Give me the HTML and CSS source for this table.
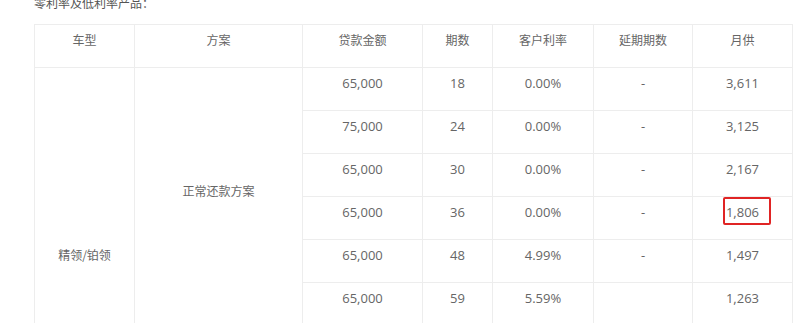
FILE: index.html
```html
<!DOCTYPE html>
<html lang="zh-CN">
<head>
<meta charset="utf-8">
<title>零利率及低利率产品</title>
<link rel="stylesheet" href="styles.css">
</head>
<body>
<div class="page">
  <p class="intro">零利率及低利率产品：</p>
  <table class="rates">
    <colgroup>
      <col class="c-model"><col class="c-plan"><col class="c-amount"><col class="c-term"><col class="c-rate"><col class="c-defer"><col class="c-month">
    </colgroup>
    <thead>
      <tr><th>车型</th><th>方案</th><th>贷款金额</th><th>期数</th><th>客户利率</th><th>延期期数</th><th>月供</th></tr>
    </thead>
    <tbody>
      <tr>
        <td rowspan="9" class="mid">精领/铂领</td>
        <td rowspan="6" class="mid">正常还款方案</td>
        <td class="num">65,000</td><td class="num">18</td><td class="num">0.00%</td><td class="num">-</td><td class="num">3,611</td>
      </tr>
      <tr><td class="num">75,000</td><td class="num">24</td><td class="num">0.00%</td><td class="num">-</td><td class="num">3,125</td></tr>
      <tr><td class="num">65,000</td><td class="num">30</td><td class="num">0.00%</td><td class="num">-</td><td class="num">2,167</td></tr>
      <tr><td class="num">65,000</td><td class="num">36</td><td class="num">0.00%</td><td class="num">-</td><td class="num mark-cell">1,806<span class="mark"></span></td></tr>
      <tr><td class="num">65,000</td><td class="num">48</td><td class="num">4.99%</td><td class="num">-</td><td class="num">1,497</td></tr>
      <tr><td class="num">65,000</td><td class="num">59</td><td class="num">5.59%</td><td class="num"></td><td class="num">1,263</td></tr>
      <tr><td rowspan="3" class="mid">延期还款方案</td><td class="num">65,000</td><td class="num">36</td><td class="num">0.00%</td><td class="num">6</td><td class="num">1,806</td></tr>
      <tr><td class="num">65,000</td><td class="num">48</td><td class="num">4.99%</td><td class="num">6</td><td class="num">1,497</td></tr>
      <tr><td class="num">65,000</td><td class="num">59</td><td class="num">5.59%</td><td class="num">6</td><td class="num">1,263</td></tr>
    </tbody>
  </table>
</div>
</body>
</html>
```
FILE: styles.css
```css
html, body {
  margin: 0;
  padding: 0;
  background: #ffffff;
}

.page {
  padding: 0 0 0 34px;
  font-family: "Open Sans", "Noto Sans CJK SC", sans-serif;
  color: #666666;
}

.intro {
  margin: -6px 0 12px;
  font-size: 12px;
  line-height: 18px;
  color: #555555;
  font-family: "Noto Sans CJK SC", sans-serif;
}

.rates {
  border-collapse: collapse;
  table-layout: fixed;
  width: 759px;
  font-size: 12px;
}

.c-model { width: 100px; }
.c-plan { width: 168px; }
.c-amount { width: 120px; }
.c-term { width: 70px; }
.c-rate { width: 101px; }
.c-defer { width: 99px; }
.c-month { width: 100px; }

.rates th,
.rates td {
  border: 1px solid #ededed;
  padding: 6px 4px 18px;
  line-height: 18px;
  text-align: center;
  vertical-align: top;
  font-weight: normal;
  color: #666666;
}

.rates th {
  font-family: "Noto Sans CJK SC", sans-serif;
}

.rates td.mid {
  vertical-align: middle;
  font-family: "Noto Sans CJK SC", sans-serif;
}

.rates td.num {
  font-size: 13px;
}

.mark-cell {
  position: relative;
}

.mark {
  position: absolute;
  left: 30px;
  top: 0;
  width: 48px;
  height: 28px;
  box-sizing: border-box;
  border: 2px solid #e02424;
  border-radius: 2px;
}
```
